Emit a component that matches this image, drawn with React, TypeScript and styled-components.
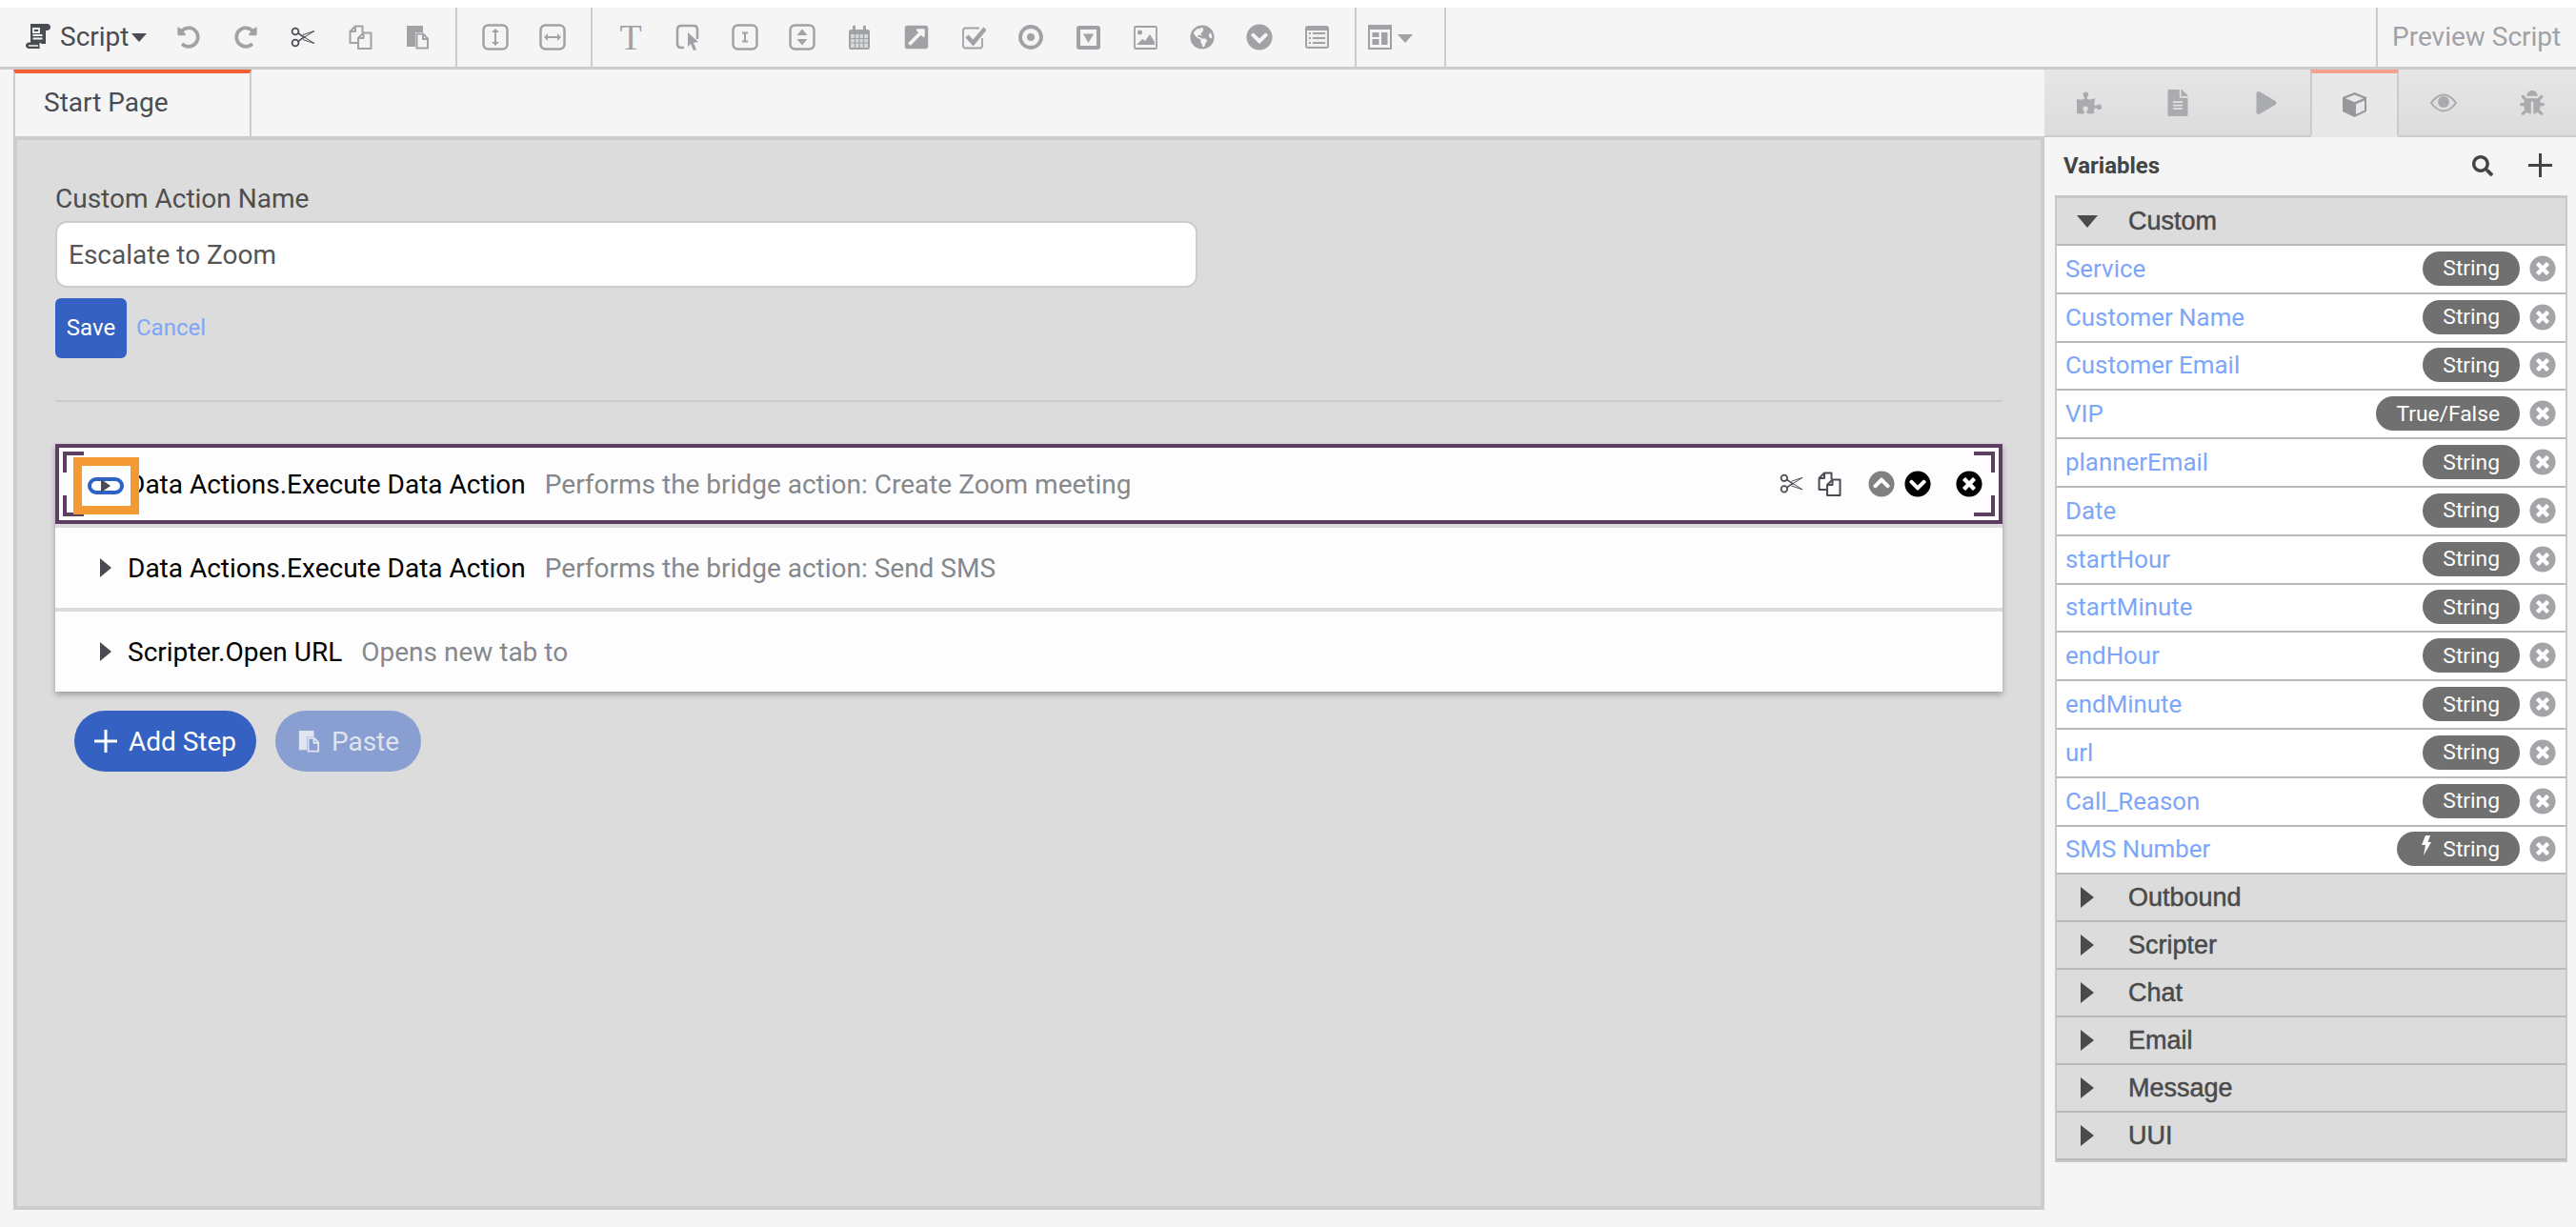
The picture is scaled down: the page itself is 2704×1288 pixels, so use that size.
import React from "react";
import styled, { createGlobalStyle } from "styled-components";
import {
  FaUndoAlt, FaRedoAlt, FaExternalLinkSquareAlt, FaGlobeAmericas,
  FaChevronCircleDown, FaChevronCircleUp, FaTimesCircle, FaPuzzlePiece, FaFileAlt, FaPlay, FaBug, FaSearch,
} from "react-icons/fa";

const Global = createGlobalStyle`
  html, body { margin: 0; padding: 0; background: #f5f5f5; }
  body { font-family: Roboto, "Liberation Sans", sans-serif; }
  * { box-sizing: border-box; }
`;

const Page = styled.div`
  width: 2704px;
  height: 1288px;
  display: flex;
  flex-direction: column;
  background: #f5f5f5;
  overflow: hidden;
  border-top: 8px solid #fff;
`;

const Toolbar = styled.div`
  height: 65px;
  flex: none;
  display: flex;
  align-items: stretch;
  border-bottom: 3px solid #ccc;
`;
const ScriptMenu = styled.div`
  width: 168px;
  flex: none;
  display: flex;
  align-items: center;
  padding: 0 0 2px 27px;
  gap: 10px;
  font-size: 28px;
  color: #4a4c54;
`;
const Caret = styled.span<{ $light?: boolean }>`
  width: 0;
  height: 0;
  margin-left: ${(p) => (p.$light ? 0 : -7)}px;
  margin-top: 3px;
  border-left: 8px solid transparent;
  border-right: 8px solid transparent;
  border-top: 9px solid ${(p) => (p.$light ? "#a0a2a6" : "#4a4c54")};
`;
const ToolGroup = styled.div<{ $pad?: number }>`
  display: flex;
  align-items: center;
  padding: 0 ${(p) => p.$pad ?? 10}px;
  border-right: 2px solid #ccc;
  flex: none;
`;
const FirstGroup = styled(ToolGroup)`
  padding: 0 10px 0 0;
`;
const ToolBtn = styled.div<{ $dark?: boolean }>`
  width: 60px;
  height: 56px;
  display: flex;
  align-items: center;
  justify-content: center;
  color: ${(p) => (p.$dark ? "#4a4c54" : "#a0a2a6")};
`;
const SerifT = styled.span`
  font-family: "Liberation Serif", serif;
  font-size: 38px;
  line-height: 1;
  color: #a0a2a6;
`;
const LayoutBtn = styled.div`
  width: 68px;
  height: 56px;
  display: flex;
  align-items: center;
  gap: 6px;
`;
const Spacer = styled.div`
  flex: 1;
`;
const Preview = styled.div`
  width: 210px;
  flex: none;
  border-left: 2px solid #ccc;
  display: flex;
  align-items: center;
  padding: 0 0 2px 15px;
  font-size: 28px;
  color: #a0a2a6;
  white-space: nowrap;
`;

const Body = styled.div`
  flex: 1;
  display: flex;
  min-height: 0;
`;
const LeftColumn = styled.div`
  width: 2146px;
  flex: none;
  padding: 0 0 18px 14px;
  display: flex;
  flex-direction: column;
`;
const TabStrip = styled.div`
  height: 70px;
  flex: none;
  display: flex;
`;
const PageTab = styled.div`
  width: 250px;
  border-top: 4px solid #f26135;
  border-left: 2px solid #ccc;
  border-right: 2px solid #ccc;
  display: flex;
  align-items: center;
  padding: 0 0 6px 30px;
  font-size: 28px;
  color: #4a4c54;
`;
const Panel = styled.div`
  flex: 1;
  border: 4px solid #ccc;
  background: #dcdcdc;
  padding: 46px 40px 0;
`;
const FieldLabel = styled.div`
  font-size: 28px;
  line-height: 32px;
  color: #4e4e4e;
`;
const NameInput = styled.div`
  width: 1199px;
  height: 70px;
  margin-top: 7px;
  background: #fff;
  border: 2px solid #ccc;
  border-radius: 12px;
  display: flex;
  align-items: center;
  padding-left: 12px;
  font-size: 28px;
  color: #555;
`;
const FormActions = styled.div`
  display: flex;
  align-items: center;
  gap: 10px;
  margin-top: 11px;
`;
const SaveBtn = styled.div`
  width: 75px;
  height: 63px;
  padding-bottom: 2px;
  background: #3561c2;
  border-radius: 6px;
  color: #fff;
  font-size: 24px;
  display: flex;
  align-items: center;
  justify-content: center;
`;
const CancelLink = styled.span`
  font-size: 24px;
  color: #7ea6f8;
  margin-top: -2px;
`;
const Rule = styled.div`
  height: 2px;
  background: #ccc;
  margin: 44px 0;
`;
const StepList = styled.div`
  display: flex;
  flex-direction: column;
  gap: 4px;
  box-shadow: 0 3px 6px rgba(0, 0, 0, 0.3);
`;
const StepRow = styled.div<{ $selected?: boolean }>`
  position: relative;
  height: 84px;
  background: #fdfdfd;
  display: flex;
  align-items: center;
  padding: 0 ${(p) => (p.$selected ? 17 : 21)}px 0 ${(p) => (p.$selected ? 43 : 47)}px;
  border: ${(p) => (p.$selected ? "4px solid #5d3f62" : "none")};
`;
const RightTriangle = styled.span<{ $w?: number; $h?: number; $c?: string }>`
  flex: none;
  width: 0;
  height: 0;
  border-top: ${(p) => p.$h ?? 10}px solid transparent;
  border-bottom: ${(p) => p.$h ?? 10}px solid transparent;
  border-left: ${(p) => p.$w ?? 12}px solid ${(p) => p.$c ?? "#4a4c54"};
`;
const StepTitle = styled.span`
  margin-left: 17px;
  font-size: 28px;
  color: #000;
  white-space: nowrap;
`;
const StepDesc = styled.span`
  margin-left: 20px;
  font-size: 28px;
  color: #85888c;
  white-space: nowrap;
`;
const StepTools = styled.div`
  margin-left: auto;
  display: flex;
  align-items: center;
  color: #4a4c54;
`;
const StepTool = styled.span<{ $ml?: number; $c?: string }>`
  display: flex;
  margin-left: ${(p) => p.$ml ?? 0}px;
  color: ${(p) => p.$c ?? "inherit"};
`;
const Bracket = styled.span<{ $pos: "tl" | "bl" | "tr" | "br" }>`
  position: absolute;
  width: 22px;
  height: 22px;
  border: 0 solid #5d3f62;
  ${(p) => (p.$pos[0] === "t" ? "top: 4px; border-top-width: 4px;" : "bottom: 4px; border-bottom-width: 4px;")}
  ${(p) => (p.$pos[1] === "l" ? "left: 4px; border-left-width: 4px;" : "right: 4px; border-right-width: 4px;")}
`;
const FocusBox = styled.div`
  position: absolute;
  left: 15px;
  top: 10px;
  width: 69px;
  height: 60px;
  border: 9px solid #f39a35;
  background: #fdfdfd;
  display: flex;
  align-items: center;
  padding-left: 6px;
`;
const TogglePill = styled.div`
  width: 38px;
  height: 18px;
  border: 4px solid #2a62c6;
  border-radius: 9px;
  display: flex;
  align-items: center;
  padding-left: 10px;
`;
const PillActions = styled.div`
  display: flex;
  gap: 20px;
  margin: 20px 0 0 20px;
`;
const RoundBtn = styled.div<{ $disabled?: boolean }>`
  height: 64px;
  width: ${(p) => (p.$disabled ? 153 : 191)}px;
  border-radius: 32px;
  background: ${(p) => (p.$disabled ? "#8a9fd1" : "#3561c2")};
  color: ${(p) => (p.$disabled ? "#dfe4f0" : "#fff")};
  font-size: 28px;
  display: flex;
  align-items: center;
  justify-content: center;
  gap: 12px;
`;

const Sidebar = styled.div`
  flex: 1;
  display: flex;
  flex-direction: column;
  min-width: 0;
`;
const SideTabs = styled.div`
  height: 71px;
  flex: none;
  display: grid;
  grid-template-columns: repeat(6, 1fr);
`;
const SideTab = styled.div<{ $active?: boolean }>`
  display: flex;
  align-items: center;
  justify-content: center;
  color: #a9abae;
  background: ${(p) => (p.$active ? "#e8e8e8" : "linear-gradient(#e6e6e6, #dcdcdc)")};
  border-bottom: 2px solid ${(p) => (p.$active ? "#e8e8e8" : "#ccc")};
  ${(p) => p.$active && "border-top: 4px solid #f2a28d; border-left: 2px solid #ccc; border-right: 2px solid #ccc; color: #96989c;"}
`;
const VarHead = styled.div`
  height: 61px;
  flex: none;
  display: flex;
  align-items: center;
  padding: 0 25px 2px 20px;
  font-size: 24px;
  font-weight: 700;
  color: #444;
`;
const HeadIcons = styled.div`
  margin-left: auto;
  display: flex;
  align-items: center;
  gap: 37px;
`;
const Tree = styled.div`
  margin: 0 9px 0 11px;
  border: 2px solid #c8c8c8;
  border-top-width: 3px;
  border-bottom-width: 2px;
`;
const GroupHead = styled.div`
  height: 50px;
  display: flex;
  align-items: center;
  background: #dcdcdc;
  border-bottom: 2px solid #b9b9b9;
  padding-left: 25px;
  font-family: "Liberation Sans", sans-serif;
  font-size: 27px;
  color: #4a4a4a;
  -webkit-text-stroke: 0.5px #4a4a4a;
`;
const GroupArrow = styled.span`
  width: 50px;
  flex: none;
  display: flex;
`;
const DownTriangle = styled.span`
  width: 0;
  height: 0;
  margin-left: -4px;
  border-left: 11px solid transparent;
  border-right: 11px solid transparent;
  border-top: 13px solid #4a4a4a;
`;
const VarRow = styled.div`
  height: 50.8px;
  display: flex;
  align-items: center;
  background: #fff;
  border-bottom: 2px solid #b9b9b9;
  padding: 0 10px 1px 9px;
  gap: 10px;
`;
const VarName = styled.span`
  flex: 1;
  font-size: 25.9px;
  color: #7ea6f8;
  white-space: nowrap;
`;
const TypePill = styled.span`
  height: 36px;
  padding: 0 21px;
  border-radius: 18px;
  background: #707070;
  color: #fff;
  font-size: 22.8px;
  display: flex;
  align-items: center;
  gap: 12px;
`;
const BoltMark = styled.svg`
  margin: -8px 0 0 4px;
`;
const RemoveIcon = styled.span`
  display: flex;
  color: #a5a5a9;
  background: #fff;
  border-radius: 50%;
`;

const I = "#a0a2a6";
const ScissorsIcon = ({ s = 26 }: { s?: number }) => (
  <svg width={s} height={s * 0.85} viewBox="0 0 26 22" fill="none" stroke="#4a4c54">
    <circle cx="5" cy="5" r="3.400" strokeWidth="1.800" />
    <circle cx="5" cy="17" r="3.400" strokeWidth="1.800" />
    <path d="M8 6.500l3 2.500 3.500 2-3.500 2-3 2.500" strokeWidth="1.600" />
    <path d="M14.500 11L25 4.500 13 8.500M14.500 11L25 17.500 13 13.500" strokeWidth="1" strokeLinejoin="round" />
  </svg>
);
const CopyIcon = ({ c = I }: { c?: string }) => (
  <svg width="25" height="26" viewBox="0 0 25 26" fill="none" stroke={c} strokeWidth="2" strokeLinejoin="round">
    <path d="M10 19H1.500V7L7 1.500h7.500V8" />
    <path d="M7 1.500V7H1.500" />
    <path d="M10 14l5.500-5.500h8V25H10z" />
    <path d="M15.500 8.500V14H10" />
  </svg>
);
const PasteIcon = ({ c = I, s = 26 }: { c?: string; s?: number }) => (
  <svg width={s} height={s} viewBox="0 0 26 26">
    <path d="M2 1h17v7h-8v15H2z" fill={c} />
    <path d="M12.500 9.500h6.500l5 5v10H12.500z" fill="none" stroke={c} strokeWidth="2" />
    <path d="M19 9.500V15h5" fill="none" stroke={c} strokeWidth="2" />
  </svg>
);
const ScrollIcon = () => (
  <svg width="26" height="28" viewBox="0 0 26 28">
    <path d="M5 1h17.500c2 0 3.500 1.500 3.500 3.500S24.500 8 22 8h-1v14h-5v-1H5z" fill="#4a4c54" />
    <path d="M3.500 20.500H15c-.8 1-.8 5 0 6.500H3.500C1.500 27 0 25.500 0 23.800s1.500-3.300 3.500-3.300z" fill="#4a4c54" />
    <path d="M8 6h6v4H8zM7.500 13h10M7.500 16.500h10" fill="none" stroke="#f5f5f5" strokeWidth="1.800" />
    <path d="M3 24h10" stroke="#f5f5f5" strokeWidth="1.500" />
  </svg>
);
const Box = ({ children, w = 28 }: { children: React.ReactNode; w?: number }) => (
  <svg width={w} height="28" viewBox={`0 0 ${w} 28`} fill="none">
    <rect x="1.500" y="1.500" width={w - 3} height="25" rx="5" stroke={I} strokeWidth="2.500" />
    {children}
  </svg>
);

const Tb = {
  height: (
    <Box>
      <path d="M14 6v16" stroke={I} strokeWidth="2" />
      <path d="M10 9l4-4 4 4zM10 19l4 4 4-4z" fill={I} />
    </Box>
  ),
  width: (
    <Box>
      <path d="M7 14h14" stroke={I} strokeWidth="2" />
      <path d="M9 10l-4 4 4 4zM19 10l4 4-4 4z" fill={I} />
    </Box>
  ),
  pointer: (
    <svg width="26" height="28" viewBox="0 0 26 28" fill="none">
      <path d="M9 25H6c-2.500 0-4-1.500-4-4V6c0-2.500 1.500-4 4-4h13c2.500 0 4 1.500 4 4v10" stroke={I} strokeWidth="2.500" />
      <path d="M13 9l11 10-5 1 3 7-3 1-3-7-3 3z" fill={I} />
    </svg>
  ),
  input: (
    <Box>
      <path d="M11 9.500h6M11 18.500h6M14 9.500v9" stroke={I} strokeWidth="2" />
    </Box>
  ),
  spinner: (
    <Box>
      <path d="M8.500 12l5.500-6.500 5.500 6.500zM8.500 16l5.500 6.500 5.500-6.500z" fill={I} />
    </Box>
  ),
  calendar: (
    <svg width="24" height="27" viewBox="0 0 24 27" fill="none">
      <rect x="1" y="5" width="22" height="21" rx="2" fill={I} />
      <path d="M3 10h18v14H3z" fill="#d6d7d8" />
      <path d="M3 14.500h18M3 19h18M7.500 10v14M12 10v14M16.500 10v14" stroke={I} strokeWidth="1.200" />
      <path d="M6.500 2v6M17.500 2v6" stroke={I} strokeWidth="3" strokeLinecap="round" />
    </svg>
  ),
  check: (
    <svg width="25" height="25" viewBox="0 0 25 25" fill="none">
      <path d="M21 13v8c0 1.500-1 2.500-2.500 2.500h-15C2 23.500 1 22.500 1 21V5c0-1.500 1-2.500 2.500-2.500H18" stroke={I} strokeWidth="1.800" />
      <path d="M5 11l6.500 7L24 3" stroke={I} strokeWidth="4.500" />
    </svg>
  ),
  radio: (
    <svg width="26" height="26" viewBox="0 0 26 26" fill="none">
      <circle cx="13" cy="13" r="11" stroke={I} strokeWidth="3.800" />
      <circle cx="13" cy="13" r="4" fill={I} />
    </svg>
  ),
  select: (
    <svg width="25" height="25" viewBox="0 0 25 25">
      <rect width="25" height="25" rx="3" fill={I} />
      <rect x="4" y="4" width="17" height="17" fill="#f5f5f5" />
      <path d="M7 8.500h11l-5.500 9.500z" fill={I} />
    </svg>
  ),
  image: (
    <svg width="25" height="25" viewBox="0 0 25 25" fill="none">
      <rect x="1" y="1" width="23" height="23" rx="1" stroke={I} strokeWidth="1.800" />
      <circle cx="6.500" cy="7" r="2.500" fill={I} />
      <path d="M3 20l6-6 3 2 5-7 5 8v3z" fill={I} />
    </svg>
  ),
  list: (
    <svg width="25" height="24" viewBox="0 0 25 24">
      <rect x="0" y="0" width="25" height="24" rx="3" fill={I} />
      <rect x="2" y="5" width="21" height="17" fill="#f0f0f0" />
      <path d="M4 8h2M4 13h2M4 18h2M8 8h13M8 13h13M8 18h13" stroke={I} strokeWidth="2" />
    </svg>
  ),
  layout: (
    <svg width="25" height="26" viewBox="0 0 25 26">
      <rect x="0" y="0" width="25" height="26" fill={I} />
      <rect x="2" y="5" width="21" height="19" fill="#f5f5f5" />
      <rect x="4.500" y="8" width="7" height="5" fill={I} />
      <rect x="4.500" y="15" width="7" height="6" fill={I} />
      <rect x="14" y="8" width="6.500" height="13" fill={I} />
    </svg>
  ),
};
const CubeIcon = () => (
  <svg width="27" height="27" viewBox="0 0 27 27">
    <path d="M13.500 1L26 6v15l-12.500 6L1 21V6z" fill="#96989c" />
    <path d="M13.500 3.500L23 7.200l-9.500 4-9.500-4z" fill="#e8e8e8" />
    <path d="M15 13.200l9-3.800v10.300l-9 4.300z" fill="#e8e8e8" />
  </svg>
);
const EyeIcon = () => (
  <svg width="28" height="20" viewBox="0 0 28 20" fill="none">
    <path d="M1 10c4-5.500 8-8.500 13-8.500S23 4.500 27 10c-4 5.500-8 8.500-13 8.500S5 15.500 1 10z" stroke="#a9abae" strokeWidth="2" />
    <circle cx="14" cy="9" r="6" fill="#a9abae" />
  </svg>
);

const customVars: [string, string, boolean?][] = [
  ["Service", "String"],
  ["Customer Name", "String"],
  ["Customer Email", "String"],
  ["VIP", "True/False"],
  ["plannerEmail", "String"],
  ["Date", "String"],
  ["startHour", "String"],
  ["startMinute", "String"],
  ["endHour", "String"],
  ["endMinute", "String"],
  ["url", "String"],
  ["Call_Reason", "String"],
  ["SMS Number", "String", true],
];
const collapsed = ["Outbound", "Scripter", "Chat", "Email", "Message", "UUI"];

export default function App() {
  return (
    <Page>
      <Global />
      <Toolbar>
        <ScriptMenu>
          <ScrollIcon />
          Script
          <Caret />
        </ScriptMenu>
        <FirstGroup>
          <ToolBtn><FaUndoAlt size={24} /></ToolBtn>
          <ToolBtn><FaRedoAlt size={24} /></ToolBtn>
          <ToolBtn $dark><ScissorsIcon /></ToolBtn>
          <ToolBtn><CopyIcon /></ToolBtn>
          <ToolBtn><PasteIcon /></ToolBtn>
        </FirstGroup>
        <ToolGroup>
          <ToolBtn>{Tb.height}</ToolBtn>
          <ToolBtn>{Tb.width}</ToolBtn>
        </ToolGroup>
        <ToolGroup>
          <ToolBtn><SerifT>T</SerifT></ToolBtn>
          <ToolBtn>{Tb.pointer}</ToolBtn>
          <ToolBtn>{Tb.input}</ToolBtn>
          <ToolBtn>{Tb.spinner}</ToolBtn>
          <ToolBtn>{Tb.calendar}</ToolBtn>
          <ToolBtn><FaExternalLinkSquareAlt size={28} /></ToolBtn>
          <ToolBtn>{Tb.check}</ToolBtn>
          <ToolBtn>{Tb.radio}</ToolBtn>
          <ToolBtn>{Tb.select}</ToolBtn>
          <ToolBtn>{Tb.image}</ToolBtn>
          <ToolBtn><FaGlobeAmericas size={26} /></ToolBtn>
          <ToolBtn><FaChevronCircleDown size={28} /></ToolBtn>
          <ToolBtn>{Tb.list}</ToolBtn>
        </ToolGroup>
        <ToolGroup $pad={12}>
          <LayoutBtn>
            {Tb.layout}
            <Caret $light />
          </LayoutBtn>
        </ToolGroup>
        <Spacer />
        <Preview>Preview Script</Preview>
      </Toolbar>
      <Body>
        <LeftColumn>
          <TabStrip>
            <PageTab>Start Page</PageTab>
          </TabStrip>
          <Panel>
            <FieldLabel>Custom Action Name</FieldLabel>
            <NameInput>Escalate to Zoom</NameInput>
            <FormActions>
              <SaveBtn>Save</SaveBtn>
              <CancelLink>Cancel</CancelLink>
            </FormActions>
            <Rule />
            <StepList>
              <StepRow $selected>
                <RightTriangle />
                <StepTitle>Data Actions.Execute Data Action</StepTitle>
                <StepDesc>Performs the bridge action: Create Zoom meeting</StepDesc>
                <StepTools>
                  <StepTool><ScissorsIcon s={25} /></StepTool>
                  <StepTool $ml={15}><CopyIcon c="#4a4c54" /></StepTool>
                  <StepTool $ml={28} $c="#808080"><FaChevronCircleUp size={28} /></StepTool>
                  <StepTool $ml={10} $c="#000"><FaChevronCircleDown size={28} /></StepTool>
                  <StepTool $ml={26} $c="#000"><FaTimesCircle size={28} /></StepTool>
                </StepTools>
                <Bracket $pos="tl" />
                <Bracket $pos="bl" />
                <Bracket $pos="tr" />
                <Bracket $pos="br" />
                <FocusBox>
                  <TogglePill><RightTriangle $w={10} $h={7} /></TogglePill>
                </FocusBox>
              </StepRow>
              <StepRow>
                <RightTriangle />
                <StepTitle>Data Actions.Execute Data Action</StepTitle>
                <StepDesc>Performs the bridge action: Send SMS</StepDesc>
              </StepRow>
              <StepRow>
                <RightTriangle />
                <StepTitle>Scripter.Open URL</StepTitle>
                <StepDesc>Opens new tab to</StepDesc>
              </StepRow>
            </StepList>
            <PillActions>
              <RoundBtn>
                <svg width="24" height="24" viewBox="0 0 24 24">
                  <path d="M12 0v24M0 12h24" stroke="#fff" strokeWidth="3" />
                </svg>
                Add Step
              </RoundBtn>
              <RoundBtn $disabled>
                <PasteIcon c="#dfe4f0" s={24} />
                Paste
              </RoundBtn>
            </PillActions>
          </Panel>
        </LeftColumn>
        <Sidebar>
          <SideTabs>
            <SideTab><FaPuzzlePiece size={26} /></SideTab>
            <SideTab><FaFileAlt size={28} /></SideTab>
            <SideTab><FaPlay size={24} /></SideTab>
            <SideTab $active><CubeIcon /></SideTab>
            <SideTab><EyeIcon /></SideTab>
            <SideTab><FaBug size={26} /></SideTab>
          </SideTabs>
          <VarHead>
            Variables
            <HeadIcons>
              <FaSearch size={22} />
              <svg width="25" height="25" viewBox="0 0 25 25">
                <path d="M12.500 0v25M0 12.500h25" stroke="#444" strokeWidth="3" />
              </svg>
            </HeadIcons>
          </VarHead>
          <Tree>
            <GroupHead>
              <GroupArrow><DownTriangle /></GroupArrow>
              Custom
            </GroupHead>
            {customVars.map(([name, type, bolt]) => (
              <VarRow key={name}>
                <VarName>{name}</VarName>
                <TypePill>
                  {bolt && (
                    <BoltMark width="11" height="21" viewBox="0 0 11 21">
                      <path d="M5 0h5L7.500 7H11L3 21l2-11H1z" fill="#fff" />
                    </BoltMark>
                  )}
                  {type}
                </TypePill>
                <RemoveIcon><FaTimesCircle size={28} /></RemoveIcon>
              </VarRow>
            ))}
            {collapsed.map((g) => (
              <GroupHead key={g}>
                <GroupArrow><RightTriangle $w={14} $h={11} $c="#4a4a4a" /></GroupArrow>
                {g}
              </GroupHead>
            ))}
          </Tree>
        </Sidebar>
      </Body>
    </Page>
  );
}
